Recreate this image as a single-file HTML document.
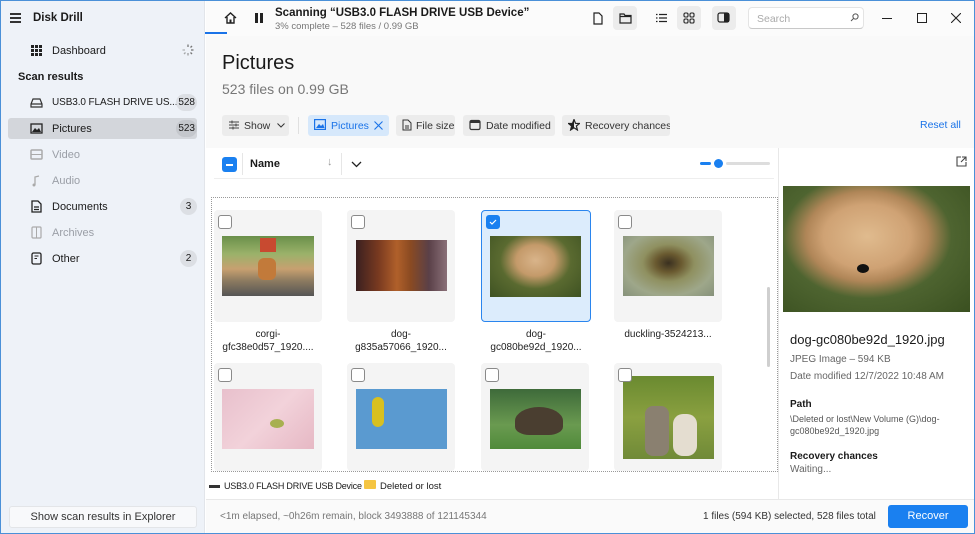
<!DOCTYPE html>
<html><head><meta charset="utf-8"><style>
*{box-sizing:border-box;margin:0;padding:0}
body{width:975px;height:534px;overflow:hidden;font-family:"Liberation Sans",sans-serif;font-size:11px;color:#1a1a1a;background:#fff;position:relative}
.abs{position:absolute;white-space:nowrap}
#side{left:0;top:0;width:205px;height:534px;background:#eef2f8;border-right:1px solid #e2e5ea}
.nav{position:absolute;left:8px;width:189px;height:21px;border-radius:3px;display:flex;align-items:center;padding-left:44px;font-size:11px;white-space:nowrap}
.nav .ic{position:absolute;left:22px;top:4px;width:13px;height:13px}
.badge{position:absolute;right:0;top:2px;min-width:17px;height:17px;border-radius:9px;background:#dcdfe4;font-size:10px;display:flex;align-items:center;justify-content:center;padding:0 2px}
.dim{color:#9a9ea6}
#top{left:206px;top:0;width:769px;height:36px;background:#fbfbfb}
#hdr{left:206px;top:36px;width:769px;height:112px;background:#f9f9f9}
.chip{position:absolute;top:115px;height:21px;border-radius:3px;background:#ececec;display:flex;align-items:center;font-size:10.5px;color:#333;padding-left:22px;white-space:nowrap;overflow:hidden}
.chip svg{position:absolute;left:6px;top:4px}
.card{position:absolute;width:108px;height:112px;background:#f4f4f4;border-radius:4px}
.cb{position:absolute;left:4px;top:5px;width:14px;height:14px;border:1px solid #8a8a8a;border-radius:3px;background:#fff}
.img{position:absolute}
.lbl{position:absolute;width:120px;text-align:center;font-size:10px;line-height:13px;color:#222}
.tb{position:absolute;top:6px;width:24px;height:24px;border-radius:4px}
</style></head><body>
<div class="abs" id="side"></div>
<div class="abs" style="left:10px;top:13px;width:11px;height:1.5px;background:#333;box-shadow:0 4px #333,0 8px #333"></div>
<div class="abs" style="left:33px;top:12px;font-size:11.5px;font-weight:bold">Disk Drill</div>
<div class="nav" style="top:40px">
<svg class="ic" viewBox="0 0 13 13"><g fill="#222"><rect x="1" y="1" width="3" height="3"/><rect x="5" y="1" width="3" height="3"/><rect x="9" y="1" width="3" height="3"/><rect x="1" y="5" width="3" height="3"/><rect x="5" y="5" width="3" height="3"/><rect x="9" y="5" width="3" height="3"/><rect x="1" y="9" width="3" height="3"/><rect x="5" y="9" width="3" height="3"/><rect x="9" y="9" width="3" height="3"/></g></svg>Dashboard
<svg style="position:absolute;right:3px;top:4px" width="12" height="12" viewBox="0 0 12 12"><g stroke="#777" stroke-width="1.3"><line x1="6" y1="0.5" x2="6" y2="3"/><line x1="10" y1="2" x2="8.5" y2="3.5"/><line x1="11.5" y1="6" x2="9" y2="6"/><line x1="10" y1="10" x2="8.5" y2="8.5"/><line x1="6" y1="11.5" x2="6" y2="9" opacity=".7"/><line x1="2" y1="10" x2="3.5" y2="8.5" opacity=".6"/><line x1="0.5" y1="6" x2="3" y2="6" opacity=".5"/></g></svg></div>
<div class="abs" style="left:18px;top:71px;font-weight:bold;font-size:11px">Scan results</div>
<div class="nav" style="top:92px"><svg class="ic" viewBox="0 0 13 13"><path d="M1 8 L3 3 H10 L12 8 V11 H1 Z M1 8 H12" fill="none" stroke="#333" stroke-width="1.2"/></svg><span style="font-size:10px;letter-spacing:-0.1px">USB3.0 FLASH DRIVE US...</span><span class="badge">528</span></div>
<div class="nav" style="top:118px;background:#d3d6db"><svg class="ic" viewBox="0 0 13 13"><rect x="1" y="2" width="11" height="9" fill="none" stroke="#222" stroke-width="1.3"/><path d="M2 10 L5 6 L7 8 L9 6 L11 10Z" fill="#222"/></svg>Pictures<span class="badge" style="background:#c4c7cc">523</span></div>
<div class="nav dim" style="top:144px"><svg class="ic" viewBox="0 0 13 13"><rect x="1" y="2" width="11" height="9" rx="1" fill="none" stroke="#aaa" stroke-width="1.5"/><line x1="1" y1="6.5" x2="12" y2="6.5" stroke="#aaa"/></svg>Video</div>
<div class="nav dim" style="top:170px"><svg class="ic" viewBox="0 0 13 13"><path d="M5 11 V3 L9 2" fill="none" stroke="#aaa" stroke-width="1.3"/><circle cx="4" cy="11" r="1.5" fill="#aaa"/></svg>Audio</div>
<div class="nav" style="top:196px"><svg class="ic" viewBox="0 0 13 13"><path d="M2 1 H8 L11 4 V12 H2Z M4 7 H9 M4 9.5 H9" fill="none" stroke="#222" stroke-width="1.3"/></svg>Documents<span class="badge">3</span></div>
<div class="nav dim" style="top:222px"><svg class="ic" viewBox="0 0 13 13"><rect x="2" y="1" width="9" height="11" rx="1" fill="none" stroke="#aaa" stroke-width="1.2"/><line x1="6.5" y1="1" x2="6.5" y2="12" stroke="#aaa"/></svg>Archives</div>
<div class="nav" style="top:248px"><svg class="ic" viewBox="0 0 13 13"><rect x="2" y="1" width="9" height="11" rx="1.5" fill="none" stroke="#222" stroke-width="1.3"/><path d="M4.5 4 H8.5 M4.5 6.5 H7" stroke="#222"/></svg>Other<span class="badge">2</span></div>
<div class="abs" style="left:9px;top:506px;width:188px;height:22px;background:#f8f9fb;border:1px solid #e3e5e8;border-radius:3px;text-align:center;line-height:20px;font-size:11px;color:#333">Show scan results in Explorer</div>

<div class="abs" id="top"></div>
<svg class="abs" style="left:224px;top:12px" width="13" height="12" viewBox="0 0 13 12"><path d="M1 6 L6.5 1 L12 6 M3 5 V11 H10 V5" fill="none" stroke="#222" stroke-width="1.4"/><rect x="5.5" y="7.5" width="2" height="3.5" fill="#222"/></svg>
<div class="abs" style="left:205px;top:32px;width:22px;height:2px;background:#1a73e8"></div>
<div class="abs" style="left:255px;top:13px;width:3px;height:10px;background:#222;box-shadow:5px 0 #222"></div>
<div class="abs" style="left:275px;top:7px;font-size:11.5px;font-weight:bold">Scanning “USB3.0 FLASH DRIVE USB Device”</div>
<div class="abs" style="left:275px;top:21px;font-size:9.5px;color:#777">3% complete – 528 files / 0.99 GB</div>
<svg class="abs" style="left:593px;top:12px" width="10" height="13" viewBox="0 0 10 13"><path d="M1 1 H6 L9 4 V12 H1Z" fill="none" stroke="#222" stroke-width="1.2"/></svg>
<div class="tb" style="left:613px;background:#ececec"></div>
<svg class="abs" style="left:619px;top:13px" width="13" height="11" viewBox="0 0 13 11"><path d="M1 1 H5 L6 2.5 H12 V10 H1Z M1 3.5 H12" fill="none" stroke="#222" stroke-width="1.2"/></svg>
<svg class="abs" style="left:655px;top:13px" width="12" height="10" viewBox="0 0 12 10"><g stroke="#222" stroke-width="1.2"><path d="M1 1.5h1.5M4 1.5h8M1 5h1.5M4 5h8M1 8.5h1.5M4 8.5h8"/></g></svg>
<div class="tb" style="left:677px;background:#ececec"></div>
<svg class="abs" style="left:683px;top:12px" width="12" height="12" viewBox="0 0 12 12"><g fill="none" stroke="#222" stroke-width="1.1"><rect x="1" y="1" width="4" height="4" rx="1.3"/><rect x="7" y="1" width="4" height="4" rx="1.3"/><rect x="1" y="7" width="4" height="4" rx="1.3"/><rect x="7" y="7" width="4" height="4" rx="1.3"/></g></svg>
<div class="tb" style="left:712px;background:#ececec"></div>
<svg class="abs" style="left:717px;top:12px" width="13" height="11" viewBox="0 0 13 11"><rect x="1" y="1" width="11" height="9" rx="2" fill="none" stroke="#222" stroke-width="1.2"/><rect x="7" y="1" width="5" height="9" fill="#222"/></svg>
<div class="abs" style="left:748px;top:7px;width:116px;height:22px;background:#fff;border:1px solid #e4e4e4;border-bottom-color:#c8c8c8;border-radius:4px;font-size:10.5px;color:#aaa;padding:5px 8px">Search</div>
<svg class="abs" style="left:850px;top:13px" width="9" height="9" viewBox="0 0 9 9"><circle cx="5.5" cy="3.5" r="2.6" fill="none" stroke="#555"/><line x1="3.5" y1="5.5" x2="1" y2="8" stroke="#555"/></svg>
<div class="abs" style="left:882px;top:18px;width:10px;height:1px;background:#222"></div>
<div class="abs" style="left:917px;top:13px;width:10px;height:10px;border:1.2px solid #222"></div>
<svg class="abs" style="left:951px;top:13px" width="10" height="10"><path d="M0 0L10 10M10 0L0 10" stroke="#222" stroke-width="1.1"/></svg>

<div class="abs" id="hdr"></div>
<div class="abs" style="left:222px;top:52px;font-size:20px;font-weight:500">Pictures</div>
<div class="abs" style="left:222px;top:81px;font-size:14px;color:#777">523 files on 0.99 GB</div>
<div class="chip" style="left:222px;width:67px"><svg width="12" height="12" viewBox="0 0 12 12"><path d="M1 3h10M1 6h10M1 9h10" stroke="#444"/><path d="M4 1.5v3M8 4.5v3M5 7.5v3" stroke="#444"/></svg>Show<svg style="left:55px;top:8px" width="8" height="5"><path d="M0.5 0.5L4 4L7.5 0.5" fill="none" stroke="#333"/></svg></div>
<div class="abs" style="left:298px;top:117px;width:1px;height:17px;background:#e0e0e0"></div>
<div class="chip" style="left:308px;width:81px;background:#d6e8fb;color:#1a73e8;padding-left:23px"><svg width="12" height="11" viewBox="0 0 12 11"><rect x="0.6" y="0.6" width="10.8" height="9.8" fill="none" stroke="#1a73e8" stroke-width="1.2"/><path d="M2 9 L5 5 L7 7 L9 5 L10.5 9Z" fill="#1a73e8"/></svg>Pictures<svg style="left:66px;top:6px" width="9" height="9"><path d="M0.5 0.5L8.5 8.5M8.5 0.5L0.5 8.5" stroke="#1a73e8" stroke-width="1.1"/></svg></div>
<div class="chip" style="left:396px;width:59px;padding-left:20px"><svg width="10" height="12" viewBox="0 0 10 12"><path d="M1 1H6L9 4V11H1Z M3 7H7M3 9H7" fill="none" stroke="#333"/></svg>File size</div>
<div class="chip" style="left:463px;width:92px;padding-left:23px"><svg width="12" height="12" viewBox="0 0 12 12"><rect x="1" y="1.5" width="10" height="9" rx="1.5" fill="none" stroke="#333" stroke-width="1.2"/><rect x="1" y="1.5" width="10" height="2.5" fill="#333"/></svg>Date modified</div>
<div class="chip" style="left:562px;width:108px;padding-left:23px"><svg width="12" height="12" viewBox="0 0 12 12"><path d="M6 0.5L7.5 4.3L11.5 4.5L8.4 7L9.4 11L6 8.8L2.6 11L3.6 7L0.5 4.5L4.5 4.3Z" fill="none" stroke="#222" stroke-width="1.2"/><path d="M6 0.5L6 8.8L2.6 11L3.6 7L0.5 4.5L4.5 4.3Z" fill="#222"/></svg>Recovery chances</div>
<div class="abs" style="left:920px;top:119px;font-size:10.5px;color:#1a73e8">Reset all</div>

<div class="abs" style="left:222px;top:157px;width:15px;height:15px;border-radius:3px;background:#1a80f0"><div style="position:absolute;left:4px;top:7px;width:7px;height:1.5px;background:#fff"></div></div>
<div class="abs" style="left:242px;top:153px;width:1px;height:22px;background:#e6e6e6"></div>
<div class="abs" style="left:250px;top:158px;font-weight:bold;font-size:11px">Name</div>
<div class="abs" style="left:327px;top:156px;color:#999;font-size:11px">↓</div>
<div class="abs" style="left:341px;top:153px;width:1px;height:22px;background:#e6e6e6"></div>
<svg class="abs" style="left:351px;top:161px" width="11" height="7"><path d="M1 1L5.5 5.5L10 1" fill="none" stroke="#222" stroke-width="1.3"/></svg>
<div class="abs" style="left:214px;top:178px;width:560px;height:1px;background:#eee"></div>
<div class="abs" style="left:700px;top:162px;width:11px;height:3px;border-radius:2px;background:#1a80f0"></div>
<div class="abs" style="left:714px;top:159px;width:9px;height:9px;border-radius:50%;background:#1a80f0;box-shadow:0 0 0 2px #fff"></div>
<div class="abs" style="left:726px;top:162px;width:44px;height:3px;border-radius:2px;background:#ddd"></div>
<div class="abs" style="left:778px;top:148px;width:1px;height:352px;background:#e8e8e8"></div>

<div class="abs" style="left:211px;top:197px;width:567px;height:275px;border:1px dotted #999"></div>
<div class="card" style="left:214px;top:210px"><div class="cb"></div><div class="img" style="left:8px;top:26px;width:92px;height:60px;background:linear-gradient(180deg,#6a8f4a 0%,#9bb26a 30%,#c8a070 55%,#8c7a60 75%,#555 100%)"><div style="position:absolute;left:36px;top:22px;width:18px;height:22px;background:#c27a3a;border-radius:6px"></div><div style="position:absolute;left:38px;top:2px;width:16px;height:14px;background:#c84a30"></div></div></div>
<div class="card" style="left:347px;top:210px"><div class="cb"></div><div class="img" style="left:9px;top:30px;width:91px;height:51px;background:linear-gradient(90deg,#3a2020 0%,#7a3a20 25%,#b0602a 45%,#8a4a22 60%,#5a4048 80%,#8a7078 100%)"></div></div>
<div class="card" style="left:481px;top:210px;background:#dcecfc;border:1.5px solid #2a85ee;width:110px"><div class="cb" style="background:#1a80f0;border-color:#1a80f0;left:4px;top:4px"><svg width="12" height="12" viewBox="0 0 12 12"><path d="M3 6L5 8L9 4" fill="none" stroke="#fff" stroke-width="1.2"/></svg></div><div class="img" style="left:8px;top:25px;width:91px;height:61px;background:radial-gradient(ellipse at 50% 40%,#d9b48a 0%,#c49a6a 30%,#5a6a30 55%,#3e5222 100%)"></div></div>
<div class="card" style="left:614px;top:210px"><div class="cb"></div><div class="img" style="left:9px;top:26px;width:91px;height:60px;background:radial-gradient(ellipse at 50% 45%,#3a3020 0%,#6a5a30 20%,#8f9060 40%,#9ea78a 70%,#86917a 100%)"></div></div>
<div class="lbl" style="left:208px;top:328px">corgi-<br>gfc38e0d57_1920....</div>
<div class="lbl" style="left:341px;top:328px">dog-<br>g835a57066_1920...</div>
<div class="lbl" style="left:476px;top:328px">dog-<br>gc080be92d_1920...</div>
<div class="lbl" style="left:608px;top:328px">duckling-3524213...</div>
<div class="card" style="left:214px;top:363px;height:108px"><div class="cb"></div><div class="img" style="left:8px;top:26px;width:92px;height:60px;background:linear-gradient(135deg,#e8c0cc,#f2d2da 50%,#e6b8c4)"><div style="position:absolute;left:48px;top:30px;width:14px;height:9px;background:#a8b050;border-radius:50%"></div></div></div>
<div class="card" style="left:347px;top:363px;height:108px"><div class="cb"></div><div class="img" style="left:9px;top:26px;width:91px;height:60px;background:#5a9ad0"><div style="position:absolute;left:16px;top:8px;width:12px;height:30px;background:#d8c020;border-radius:6px"></div></div></div>
<div class="card" style="left:481px;top:363px;height:108px"><div class="cb"></div><div class="img" style="left:9px;top:26px;width:91px;height:60px;background:linear-gradient(180deg,#3e6a3a,#6a9a50 60%,#4f8a3a)"><div style="position:absolute;left:25px;top:18px;width:48px;height:28px;background:#4a3e30;border-radius:50% 50% 30% 30%"></div></div></div>
<div class="card" style="left:614px;top:363px;height:108px"><div class="img" style="left:9px;top:13px;width:91px;height:83px;background:linear-gradient(180deg,#6a8a30,#8aa040 50%,#708a38)"><div style="position:absolute;left:22px;top:30px;width:24px;height:50px;background:#8a8070;border-radius:8px"></div><div style="position:absolute;left:50px;top:38px;width:24px;height:42px;background:#e4ddd0;border-radius:10px"></div></div><div class="cb"></div></div>
<div class="abs" style="left:767px;top:287px;width:3px;height:80px;border-radius:2px;background:#cfcfcf"></div>

<div class="abs" style="left:209px;top:485px;width:11px;height:3px;background:#333"></div>
<div class="abs" style="left:224px;top:481px;font-size:9px;letter-spacing:-0.2px">USB3.0 FLASH DRIVE USB Device</div>
<div class="abs" style="left:364px;top:480px;width:12px;height:9px;background:#f5c542;border-radius:1px"></div>
<div class="abs" style="left:380px;top:481px;font-size:9.5px">Deleted or lost</div>
<div class="abs" style="left:206px;top:499px;width:769px;height:1px;background:#e8e8e8"></div>
<div class="abs" style="left:206px;top:500px;width:769px;height:34px;background:#fafafa"></div>
<div class="abs" style="left:220px;top:511px;font-size:10px;color:#777">&lt;1m elapsed, ~0h26m remain, block 3493888 of 121145344</div>
<div class="abs" style="left:703px;top:511px;font-size:10px;color:#333">1 files (594 KB) selected, 528 files total</div>
<div class="abs" style="left:888px;top:505px;width:80px;height:23px;border-radius:3px;background:#1a80f0;color:#fff;text-align:center;line-height:23px;font-size:11px">Recover</div>

<svg class="abs" style="left:956px;top:156px" width="11" height="11" viewBox="0 0 11 11"><path d="M5 1H1V10H10V6M6 1H10V5M10 1L5 6" fill="none" stroke="#444" stroke-width="1.1"/></svg>
<div class="abs" style="left:783px;top:186px;width:187px;height:126px;background:radial-gradient(ellipse at 45% 40%,#e0bb8e 0%,#cfa274 30%,#b08658 42%,#4e6430 58%,#3a5020 100%)"><div style="position:absolute;left:74px;top:78px;width:12px;height:9px;background:#111;border-radius:50%"></div></div>
<div class="abs" style="left:790px;top:332px;font-size:13px;font-weight:500">dog-gc080be92d_1920.jpg</div>
<div class="abs" style="left:790px;top:354px;font-size:10px;color:#666">JPEG Image – 594 KB</div>
<div class="abs" style="left:790px;top:371px;font-size:10px;color:#666">Date modified 12/7/2022 10:48 AM</div>
<div class="abs" style="left:790px;top:399px;font-size:10px;font-weight:bold">Path</div>
<div class="abs" style="left:790px;top:413px;font-size:9px;color:#555;line-height:12px">\Deleted or lost\New Volume (G)\dog-<br>gc080be92d_1920.jpg</div>
<div class="abs" style="left:790px;top:451px;font-size:10px;font-weight:bold">Recovery chances</div>
<div class="abs" style="left:790px;top:464px;font-size:10px;color:#666">Waiting...</div>
<div class="abs" style="left:0;top:0;width:975px;height:534px;border:1px solid #4a90d8;pointer-events:none"></div>
</body></html>
